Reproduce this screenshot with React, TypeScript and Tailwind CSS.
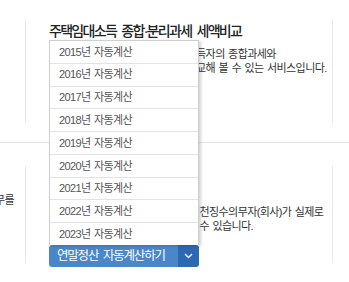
import React from 'react';

const years = [2015, 2016, 2017, 2018, 2019, 2020, 2021, 2022, 2023];

const Chevron: React.FC = () => (
  <svg width="9" height="6" viewBox="0 0 9 6" fill="none">
    <path d="M1 1l3.5 3.5L8 1" stroke="white" strokeWidth="1.4" />
  </svg>
);

const SplitButton: React.FC<{ label: string; children?: React.ReactNode }> = ({ label, children }) => (
  <div className="relative flex h-[22px] w-[171px]">
    {children}
    <button className="flex h-full w-[129px] items-center whitespace-nowrap rounded-l-[3px] bg-[#4a86c8] pl-[8px] text-[12.5px] tracking-[-1.2px] text-white [word-spacing:2.5px]">
      {label}
    </button>
    <button className="flex h-full w-[21px] items-center justify-center rounded-r-[3px] bg-[#2d69b1]">
      <Chevron />
    </button>
  </div>
);

const YearMenu: React.FC = () => (
  <div className="absolute bottom-full left-0 z-10 flex h-[205px] w-[150px] flex-col border border-b-0 border-[#cfcfcf] bg-white shadow-[2px_1px_3px_rgba(0,0,0,0.18)]">
    {years.map((y, i) => (
      <div
        key={y}
        className={`flex flex-1 items-center whitespace-nowrap pl-[9px] text-[11px] tracking-[-0.6px] text-[#555] [word-spacing:1px] ${i > 0 ? 'border-t border-[#e3e3e3]' : ''}`}
      >
        {y}년 자동계산
      </div>
    ))}
  </div>
);

const desc = 'whitespace-nowrap text-[11px] leading-[14px] tracking-[-0.6px] text-[#333] [word-spacing:1px]';
const title = 'whitespace-nowrap text-[14px] font-medium leading-[20px] tracking-[-1.7px] text-[#222] [word-spacing:3px]';

export default function App() {
  return (
    <div
      className="h-[282px] w-[349px] overflow-hidden bg-white text-[#222]"
      style={{ fontFamily: '"Liberation Sans", "Noto Sans CJK KR", sans-serif' }}
    >
      {/* first row */}
      <div className="h-[143px] border-b border-[#e6e6e6] pt-[20px]">
        <div className="ml-[25px] flex h-[103px] w-[308px] flex-col border-x border-[#e8e8e8] pl-[23px]">
          <h2 className={`mt-[1px] ${title}`}>주택임대소득 종합·분리과세 세액비교</h2>
          <div className={`mt-[6px] ${desc}`}>
            <p>주택임대소득이 있는 개인 사업 소득자의 종합과세와</p>
            <p>분리과세 시의 예상되는 세액을 비교해 볼 수 있는 서비스입니다.</p>
          </div>
          <div className="mt-auto">
            <SplitButton label="주택임대소득 계산하기" />
          </div>
        </div>
      </div>

      {/* second row */}
      <div className="flex pt-[23px]">
        <div className="flex w-[25px] shrink-0 justify-end overflow-hidden pr-[11px] pt-[27px]">
          <p className={desc}>계산 결과 환급 또는 추가 납부할 세액을 가늠해 볼 수 있으며 신고 의무를</p>
        </div>
        <div className="flex h-[97px] w-[308px] shrink-0 flex-col border-x border-[#e8e8e8] pl-[23px]">
          <h2 className={`mt-[1px] ${title}`}>연말정산 자동계산</h2>
          <div className={`mt-[4px] ${desc}`}>
            <p>근로소득자의 연말정산 세액을</p>
            <p>근로소득 있는 근로자 본인 또는 원천징수의무자(회사)가 실제로</p>
            <p>신고하기 이전에 미리 계산하여 볼 수 있습니다.</p>
          </div>
          <div className="mb-[-4px] mt-auto">
            <SplitButton label="연말정산 자동계산하기">
              <YearMenu />
            </SplitButton>
          </div>
        </div>
      </div>
    </div>
  );
}
